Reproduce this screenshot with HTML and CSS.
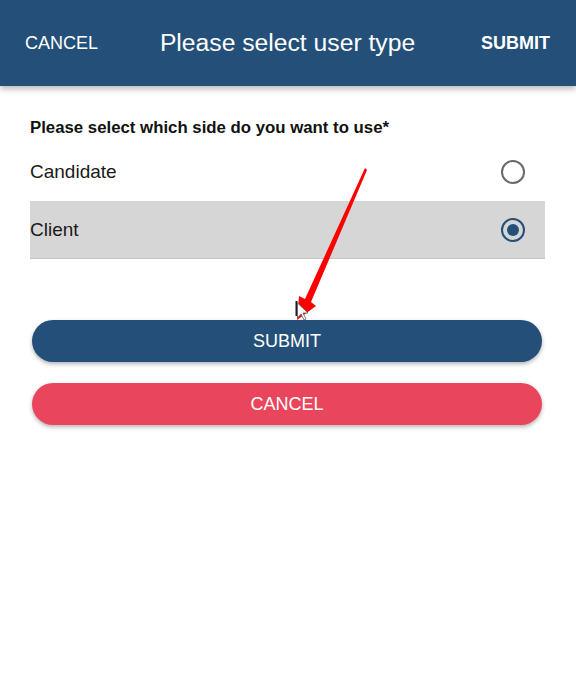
FILE: index.html
```html
<!DOCTYPE html>
<html lang="en">
<head>
<meta charset="utf-8">
<title>Please select user type</title>
<link rel="stylesheet" href="styles.css">
</head>
<body>
<header class="topbar">
  <span class="top-cancel">CANCEL</span>
  <h1 class="top-title">Please select user type</h1>
  <span class="top-submit">SUBMIT</span>
</header>
<main class="content">
  <p class="question">Please select which side do you want to use*</p>
  <div class="options">
    <div class="option">
      <span class="option-label">Candidate</span>
      <span class="radio"></span>
    </div>
    <div class="option option-selected">
      <span class="option-label">Client</span>
      <span class="radio radio-on"></span>
    </div>
  </div>
  <div class="actions">
    <button class="btn btn-submit">SUBMIT</button>
    <button class="btn btn-cancel">CANCEL</button>
  </div>
</main>
<svg class="annotation" width="576" height="691" viewBox="0 0 576 691">
  <polygon points="365,168 367,170 311,302 316,306 297,320 299,296 305,299" fill="#ff0000"/>
  <rect x="295.5" y="301" width="2" height="15" fill="#1a1a2e"/>
  <path d="M297.5 303 L297.5 318 L301 314 L304 320 L306 319 L303 313 L308 313 Z" fill="#ffffff" stroke="#555" stroke-width="0.8"/>
</svg>
</body>
</html>
```

FILE: styles.css
```css
* { box-sizing: border-box; }
html, body {
  margin: 0;
  padding: 0;
  background: #ffffff;
  font-family: "Liberation Sans", Arial, sans-serif;
}
body { position: relative; width: 576px; height: 691px; overflow: hidden; }

.topbar {
  height: 86px;
  background: #234f79;
  color: #ffffff;
  display: flex;
  align-items: center;
  justify-content: space-between;
  padding: 0 26px 0 25px;
  box-shadow: 0 3px 6px rgba(0, 0, 0, 0.28);
  position: relative;
  z-index: 1;
}
.top-cancel {
  font-size: 18px;
  padding-top: 1px;
}
.top-title {
  margin: 0;
  font-weight: normal;
  font-size: 24.7px;
  padding-right: 4px;
}
.top-submit {
  font-size: 18px;
  font-weight: bold;
}

.content {
  padding: 0 31px 0 30px;
}
.question {
  margin: 32px 0 5px;
  font-size: 16.8px;
  line-height: 20px;
  font-weight: bold;
  color: #111111;
}
.options { display: flex; flex-direction: column; }
.option {
  height: 58px;
  display: flex;
  align-items: center;
  justify-content: space-between;
  padding-right: 20px;
  color: #1a1a1a;
}
.option-label { font-size: 19px; }
.option-selected {
  background: #d6d6d6;
  border-bottom: 1px solid #c4c4c4;
}
.radio {
  width: 24px;
  height: 24px;
  border-radius: 50%;
  border: 2px solid #6a6a6a;
  display: flex;
  align-items: center;
  justify-content: center;
}
.radio-on { border-color: #234f79; }
.radio-on::after {
  content: "";
  width: 12px;
  height: 12px;
  border-radius: 50%;
  background: #234f79;
}

.actions {
  display: flex;
  flex-direction: column;
  gap: 21px;
  margin-top: 61px;
  padding: 0 3px 0 2px;
}
.btn {
  height: 42px;
  border: none;
  border-radius: 21px;
  color: #ffffff;
  font-family: "Liberation Sans", Arial, sans-serif;
  font-size: 18px;
  box-shadow: 0 2px 4px rgba(0, 0, 0, 0.3);
  padding: 0;
}
.btn-submit { background: #234f79; }
.btn-cancel { background: #e9465d; }

.annotation {
  position: absolute;
  left: 0;
  top: 0;
  pointer-events: none;
  z-index: 2;
}
```
